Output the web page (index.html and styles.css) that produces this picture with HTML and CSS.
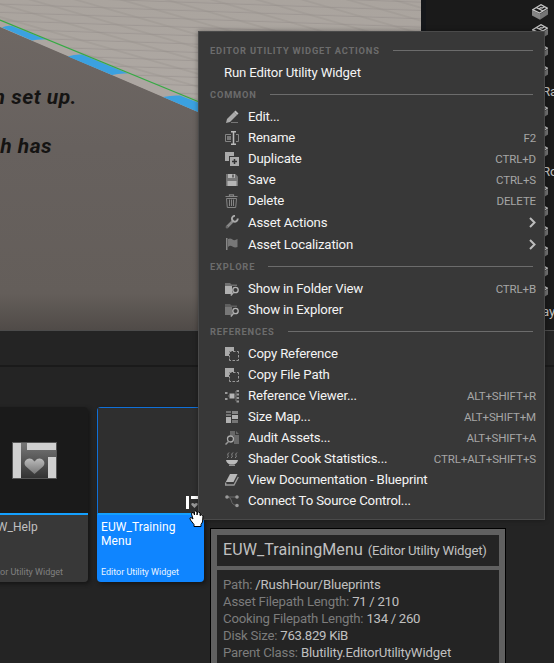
FILE: index.html
```html
<!DOCTYPE html>
<html lang="en">
<head>
<meta charset="utf-8">
<title>Editor</title>
<link rel="stylesheet" href="styles.css">
</head>
<body>
<svg width="0" height="0" class="defs">
  <defs>
    <symbol id="cube" viewBox="0 0 16 16">
      <path d="M0 6.2 8 10v5.7L0 11.4z" fill="#858585"/><path d="M8 10l8-5v5.5l-8 5.200z" fill="#747474"/>
      <path d="M.6 5.700 9 .7l6.400 3.400L7.700 9z" fill="#1a1a1a" stroke="#c4c4c4" stroke-width="1.300"/>
      <path d="m4.500 3.700 6.700 3.300M6.500 5.300l3-2M9.500 4.500l3-1.800" stroke="#c4c4c4" stroke-width="1.300"/>
    </symbol>
    <symbol id="copy" viewBox="0 0 14 14">
      <path d="M0 0h9v4H4v5H0z" fill="#aaa"/>
      <path d="M4.500 7v-2.500h2M8 4.500h2.500M12 4.500h1.500v2M13.500 8v2.500M13.500 12v1.500h-2M10 13.500H7.500M6 13.500H4.500v-2M4.500 10.500V8.500" fill="none" stroke="#999"/>
    </symbol>
    <linearGradient id="silver" x2="0" y2="1"><stop stop-color="#bbb"/><stop offset="1" stop-color="#777"/></linearGradient>
    <linearGradient id="plate" x2="0" y2="1"><stop stop-color="#777"/><stop offset="1" stop-color="#333"/></linearGradient>
    <linearGradient id="wall" x2="0" y2="1"><stop stop-color="#6e6763"/><stop offset=".4" stop-color="#67615e"/><stop offset=".88" stop-color="#645e5a"/><stop offset="1" stop-color="#504b48"/></linearGradient>
    <linearGradient id="floor" x2="0" y2="1"><stop stop-color="#aaa49e"/><stop offset="1" stop-color="#b0aaa5"/></linearGradient>
    <pattern id="tiles" width="90" height="8.300" patternUnits="userSpaceOnUse" patternTransform="skewY(2)"><path d="M0 4h90" stroke="#98928d" stroke-width=".7"/></pattern>
    <pattern id="tiles2" width="90" height="13" patternUnits="userSpaceOnUse" patternTransform="skewY(16)"><path d="M0 4h90" stroke="#96908b" stroke-width=".7"/></pattern>
  </defs>
</svg>
<div class="editor">
  <div class="top">
    <svg class="scene" width="421" height="330" viewBox="0 0 421 330">
      <rect width="421" height="130" fill="url(#floor)"/>
      <rect width="421" height="130" fill="url(#tiles)"/><rect width="421" height="130" fill="url(#tiles2)"/>
      <path d="M0 26.500 198 111.500 421 208V330H0z" fill="url(#wall)"/>
      <path d="M0 20.500 198 101.500V112L0 27z" fill="#aca6a1"/>
      <path d="M2 27.500Q7 25 12 26L46 39.500Q38 39 32 40.500zM68 56.500Q75 54 82 54.500L128 73.500Q119 73 112 75zM163 97Q172 95 180 95.500L198 102.500V112z" fill="#3ba1e0"/>
      <path d="M0 20 198 101.500" stroke="#35aa43" stroke-width="1.200"/>
      <text class="sign" x="77" y="103.500">n set up.</text>
      <text class="sign" x="52" y="153">h has</text>
    </svg>
    <div class="outliner">
      <div class="item"><svg width="16" height="16"><use href="#cube"/></svg></div>
      <div class="item"><svg width="16" height="16"><use href="#cube"/></svg></div>
      <div class="item"><svg width="16" height="16"><use href="#cube"/></svg></div>
      <div class="item"><svg width="16" height="16"><use href="#cube"/></svg></div>
      <div class="item label">Ra</div>
      <div class="item"><svg width="16" height="16"><use href="#cube"/></svg></div>
      <div class="item"><svg width="16" height="16"><use href="#cube"/></svg></div>
      <div class="item"><svg width="16" height="16"><use href="#cube"/></svg></div>
      <div class="item label">Ro</div>
      <div class="item"><svg width="16" height="16"><use href="#cube"/></svg></div>
      <div class="item"><svg width="16" height="16"><use href="#cube"/></svg></div>
      <div class="item"><svg width="16" height="16"><use href="#cube"/></svg></div>
      <div class="item"><svg width="16" height="16"><use href="#cube"/></svg></div>
      <div class="item"><svg width="16" height="16"><use href="#cube"/></svg></div>
      <div class="item"><svg width="16" height="16"><use href="#cube"/></svg></div>
      <div class="item label">ay</div>
    </div>
  </div>
  <div class="bar"></div>
  <div class="assets">
    <div class="card first">
      <div class="thumb"><svg width="45" height="37" viewBox="0 0 45 37"><path d="M0 0h45v37H0z" fill="#555"/><path d="M1 1h43v35H1z" fill="url(#plate)"/><path d="M1 1h8v35H1zM15 1h29v7H15zM36 15h8v21h-8z" fill="#d0d0d0"/><path d="M22.500 32 14 24.500c-4-4 1-10 6-7.500l2.500 2.500L25 17c5-2.500 10 3.500 6 7.500z" fill="url(#silver)"/></svg></div>
      <div class="info"><div class="name">EUW_Help</div><div class="kind">Editor Utility Widget</div></div>
    </div>
    <div class="card selected">
      <div class="thumb"><svg width="16" height="13" viewBox="0 0 16 13"><path d="M0 0h3v13H0zM5 0h11v3H5z" fill="#fff"/><path d="m8.500 12-3-3c-1-2 1.500-3 3-1 1.500-2 4-1 3 1z" fill="#999"/></svg></div>
      <div class="info"><div class="name">EUW_Training<br>Menu</div><div class="kind">Editor Utility Widget</div></div>
    </div>
  </div>
</div>

<div class="menu">
  <div class="head"><span>EDITOR UTILITY WIDGET ACTIONS</span></div>
  <div class="row plain"><span>Run Editor Utility Widget</span></div>
  <div class="head"><span>COMMON</span></div>
  <div class="row"><svg viewBox="0 0 14 14"><path d="m2 9 7-7 3 3-7 7-4 1z" fill="#aaa"/><path d="m9 2 1.500-1.500 3 3L12 5z" fill="#bbb"/><path d="M6 12.500h7" stroke="#777"/></svg><span>Edit...</span></div>
  <div class="row"><svg viewBox="0 0 14 14"><path d="M6 3.500H.5v7H6M11 3.500h2.500v7H11" fill="none" stroke="#858585"/><path d="M2 5h4v4H2z" fill="#777"/><path d="M6 .8h5M6 13.200h5M8.500 1v12" stroke="#bbb" stroke-width="1.500"/></svg><span>Rename</span><kbd>F2</kbd></div>
  <div class="row"><svg viewBox="0 0 14 14"><path d="M0 0h9v4H4v5H0z" fill="#aaa"/><path d="M5 5h9v9H5z" fill="#aaa"/><path d="M9.500 7v5M7 9.500h5" stroke="#333" stroke-width="1.500"/></svg><span>Duplicate</span><kbd>CTRL+D</kbd></div>
  <div class="row"><svg viewBox="0 0 14 14"><path d="M1 1h9.500L13 3.500V13H1z" fill="#757575"/><path d="M3 1h7v4H3zM2.500 8h9v5h-9z" fill="#b5b5b5"/><path d="M7 1.500h2v3H7z" fill="#666"/></svg><span>Save</span><kbd>CTRL+S</kbd></div>
  <div class="row"><svg viewBox="0 0 14 14"><path d="M.5 2.500h12M4.500 2V.8h4V2" fill="none" stroke="#858585" stroke-width="1.200"/><path d="M1.500 4.500h10l-.8 9h-8.400zM4.500 5.500v6.500M6.500 5.500v6.500M8.500 5.500v6.500" fill="none" stroke="#858585"/></svg><span>Delete</span><kbd>DELETE</kbd></div>
  <div class="row sub"><svg viewBox="0 0 14 14"><path d="M2 12 8 6" stroke="#888" stroke-width="2.600" stroke-linecap="round"/><path d="M12.700 3.500A2.900 2.900 0 1 1 10 .9" fill="none" stroke="#aaa" stroke-width="1.900"/><circle cx="2" cy="12" r=".7" fill="#383838"/></svg><span>Asset Actions</span><svg class="chev" viewBox="0 0 7 11"><path d="m1 1 4.500 4.500L1 10" fill="none" stroke="#bdbdbd" stroke-width="2"/></svg></div>
  <div class="row sub"><svg viewBox="0 0 14 14"><path d="M1 1h1.500v12H1z" fill="#888"/><path d="M3 2q2.500-1 4.500.5T12.500 2v8q-2.500 1-5-.5T3 10z" fill="#777"/></svg><span>Asset Localization</span><svg class="chev" viewBox="0 0 7 11"><path d="m1 1 4.500 4.500L1 10" fill="none" stroke="#bdbdbd" stroke-width="2"/></svg></div>
  <div class="head"><span>EXPLORE</span></div>
  <div class="row"><svg viewBox="0 0 14 14"><path d="M0 1h5l1.500 1.500H12V4H0z" fill="#707070"/><path d="M0 4h7v8H0z" fill="#b0b0b0"/><circle cx="10.500" cy="8" r="2.700" fill="none" stroke="#b5b5b5" stroke-width="1.300"/><path d="m8.800 10-3 3.500" stroke="#aaa" stroke-width="1.500"/></svg><span>Show in Folder View</span><kbd>CTRL+B</kbd></div>
  <div class="row"><svg viewBox="0 0 14 14"><path d="M0 1h5l1.500 1.500H12V4H0z" fill="#5e5e5e"/><path d="M0 4h7v8H0z" fill="#777"/><circle cx="10.500" cy="8" r="2.700" fill="none" stroke="#b5b5b5" stroke-width="1.300"/><path d="m8.800 10-3 3.500" stroke="#aaa" stroke-width="1.500"/></svg><span>Show in Explorer</span></div>
  <div class="head"><span>REFERENCES</span></div>
  <div class="row"><svg><use href="#copy"/></svg><span>Copy Reference</span></div>
  <div class="row"><svg><use href="#copy"/></svg><span>Copy File Path</span></div>
  <div class="row"><svg viewBox="0 0 14 14"><path d="M4.500 4.500h5v5h-5z" fill="#b5b5b5"/><path d="M0 3h2.500v2H0zM0 9h2.500v2H0zM11.500 1H14v2h-2.500zM11.500 4.500H14v2h-2.500zM11.500 8H14v2h-2.500zM11.500 11.500H14v2h-2.500z" fill="#999"/><path d="M3 7h1.500M9.500 7H11M11 2v10" stroke="#777"/></svg><span>Reference Viewer...</span><kbd>ALT+SHIFT+R</kbd></div>
  <div class="row"><svg viewBox="0 0 14 14"><path d="M1 1h5v2H1zM1 4h5v2H1zM7 10h6v3H7z" fill="#757575"/><path d="M1 7h5v6H1zM7 5h6v4H7z" fill="#b0b0b0"/><path d="M7 1h6v3H7z" fill="#858585"/></svg><span>Size Map...</span><kbd>ALT+SHIFT+M</kbd></div>
  <div class="row"><svg viewBox="0 0 14 14"><path d="M5 0h5v4h4v9H9V5H5zM11 0l3 3h-3z" fill="#686868"/><circle cx="5.500" cy="8" r="3" fill="none" stroke="#aaa" stroke-width="1.300"/><path d="M3.500 10.500.5 13.500" stroke="#999" stroke-width="1.500"/></svg><span>Audit Assets...</span><kbd>ALT+SHIFT+A</kbd></div>
  <div class="row"><svg viewBox="0 0 14 14"><path d="M4 .5q-2 1.500-1 3t-1 2.500M8 .5q-2 1.500-1 3T6 6M12 .5q-2 1.500-1 3T10 6" fill="none" stroke="#888"/><path d="M1 8h12q-.5 3-4 4.500h-4Q1.500 11 1 8z" fill="#bbb"/><path d="M4 13.300h6" stroke="#aaa"/></svg><span>Shader Cook Statistics...</span><kbd>CTRL+ALT+SHIFT+S</kbd></div>
  <div class="row"><svg viewBox="0 0 14 14"><path d="M5 1h7.500L8.500 9H.8z" fill="#b8b8b8"/><path d="M.7 9.500V12H9l4.300-8" fill="none" stroke="#999" stroke-width="1.400"/></svg><span>View Documentation - Blueprint</span></div>
  <div class="row"><svg viewBox="0 0 14 14"><path d="M2 3h10M2 3q4 0 4.500 4T12 11.500" fill="none" stroke="#666"/><path d="M.2 3a1.800 1.800 0 1 0 3.600 0 1.800 1.800 0 1 0-3.600 0M10.200 3a1.800 1.800 0 1 0 3.600 0 1.800 1.800 0 1 0-3.600 0M10.200 11.500a1.800 1.800 0 1 0 3.600 0 1.800 1.800 0 1 0-3.600 0" fill="#999"/></svg><span>Connect To Source Control...</span></div>
</div>

<div class="tip">
  <div class="title"><span class="big">EUW_TrainingMenu</span><span class="small">(Editor Utility Widget)</span></div>
  <div class="facts">
    <div>Path: <b>/RushHour/Blueprints</b></div>
    <div>Asset Filepath Length: <b class="num">71 / 210</b></div>
    <div>Cooking Filepath Length: <b class="num">134 / 260</b></div>
    <div>Disk Size: <b class="num">763.829 KiB</b></div>
    <div>Parent Class: <b>Blutility.EditorUtilityWidget</b></div>
  </div>
</div>

<svg class="cursor" width="16" height="18" viewBox="0 0 16 18"><path d="M5 16.500v-2L1.500 10Q0 7.500 2 7.500l2 1.500-1.500-5q0-2 2-1.500l1 2.500V2q1-2 2.500 0v3l.5-2.500q1.500-1.500 2.500.5v2.500q2.500-2 3 .5l-.5 6-1.500 2.500v2z" fill="#fff" stroke="#000"/></svg>
</body>
</html>
```
FILE: styles.css
```css
* { box-sizing: border-box; }
body {
  margin: 0;
  width: 554px;
  height: 663px;
  overflow: hidden;
  position: relative;
  background: #242424;
  font-family: Roboto, "Liberation Sans", sans-serif;
  font-size: 13.2px;
  letter-spacing: -.16px;
}
svg { display: block; flex: none; }
.defs { position: absolute; }

.editor { display: flex; flex-direction: column; height: 663px; }
.top { display: flex; height: 331px; border-bottom: 1px solid #4b4b4b; }
.sign { font: italic 700 21px Roboto, sans-serif; fill: #151413; text-anchor: end; letter-spacing: .5px; }
.outliner {
  flex: 1;
  height: 330px;
  overflow: hidden;
  border-left: 5px solid #15171a;
  background: #1a1a1a;
  padding-top: 2px;
}
.item { height: 20px; padding-left: 106px; display: flex; align-items: center; }
.item.label { padding: 0 0 1px 116px; color: #c0c0c0; }
.bar { height: 36px; border-bottom: 2px solid #1a1a1a; }

.assets { display: flex; gap: 9px; padding-top: 40px; }
.card { display: flex; flex-direction: column; width: 107px; height: 175px; border-radius: 4px; overflow: hidden; box-shadow: 2px 2px 4px #151515; }
.first { margin-left: -19px; }
.thumb { height: 108px; background: #1a1a1a; border-bottom: 2px solid #14a0ff; display: flex; align-items: center; justify-content: center; }
.first .thumb { padding-right: 1px; }
.info { flex: 1; display: flex; flex-direction: column; justify-content: space-between; background: #383838; color: #c0c0c0; padding: 5px 4px 4px; font-size: 12px; line-height: 14px; letter-spacing: .08px; white-space: nowrap; }
.kind { font-size: 9px; line-height: 12px; letter-spacing: -.02px; color: #808080; }
.first .info { padding-left: 1px; }
.first .kind { margin-left: 3px; }
.selected .thumb { background: #2f2f2f; border-top: 1px solid #1070d8; border-left: 1px solid #1070d8; align-items: flex-end; justify-content: flex-end; padding: 0 2px 4px 0; }
.selected .info { background: #0f85ff; color: #fff; }
.selected .kind { color: #e8f3ff; }

.menu {
  position: absolute;
  left: 198px;
  top: 31px;
  width: 347px;
  height: 489px;
  padding: 7px 8px 0 11px;
  border: 1px solid #4a4a4a;
  background: #383838;
  box-shadow: 0 0 5px rgba(0, 0, 0, .35);
  color: #f4f4f4;
}
.head { display: flex; align-items: center; gap: 13px; height: 23px; padding-right: 3px; font-size: 9.3px; font-weight: 700; letter-spacing: .82px; color: #6c6c6c; white-space: nowrap; }
.head::after { content: ""; flex: 1; height: 1px; background: #6c6c6c; }
.row { display: flex; align-items: center; height: 21px; padding-left: 15px; white-space: nowrap; }
.row svg { width: 14px; height: 14px; margin-right: 9px; }
.row.plain { padding-left: 14px; }
.sub { height: 22px; }
.row kbd { margin-left: auto; font: 11.5px Roboto, sans-serif; letter-spacing: -.14px; color: #a6a6a6; }
.row .chev { width: 7px; height: 11px; margin: 0 0 0 auto; }

.tip {
  position: absolute;
  left: 210px;
  top: 528px;
  width: 296px;
  height: 160px;
  border: 1px solid #000;
  outline: 6px solid #606060;
  outline-offset: -7px;
  background: #242424;
  color: #b5b5b5;
}
.title { display: flex; align-items: baseline; gap: 5px; height: 41px; margin: 0 6px; padding: 10px 0 0 6px; border-bottom: 4px solid #606060; color: #c0c0c0; white-space: nowrap; }
.big { font-size: 16px; line-height: 22px; letter-spacing: .1px; }
.small { letter-spacing: -.22px; }
.facts { padding: 6px 0 0 12px; line-height: 17px; letter-spacing: -.2px; color: #7c7c7c; white-space: nowrap; }
.facts b { font-weight: 400; letter-spacing: -.14px; color: #c0c0c0; }
.facts .num { letter-spacing: -.3px; }
.cursor { position: absolute; left: 189px; top: 510px; }
```
